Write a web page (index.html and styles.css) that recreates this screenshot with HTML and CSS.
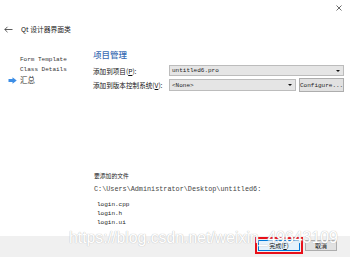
FILE: index.html
```html
<!DOCTYPE html>
<html lang="zh-CN">
<head>
    <meta charset="UTF-8">
    <meta name="viewport" content="width=device-width, initial-scale=1.0">
    <title>Qt 设计器界面类</title>
    <link rel="stylesheet" href="styles.css">
</head>
<body>

    <div class="wizard">
        <div class="titlebar">
            <svg class="close" width="6" height="6" viewBox="0 0 6 6">
                <path d="M0.5 0.5 L5.5 5.5 M5.5 0.5 L0.5 5.5" stroke="#444" stroke-width="0.8" fill="none"/>
            </svg>
        </div>

        <div class="title-row">
            <svg class="back" width="9" height="7" viewBox="0 0 9 7">
                <path d="M0.8 3.5 H8.5 M3.5 0.8 L0.8 3.5 L3.5 6.2" stroke="#333" stroke-width="0.8" fill="none"/>
            </svg>
            <span>Qt 设计器界面类</span>
        </div>

        <div class="main">
            <ul class="steps">
                <li>Form Template</li>
                <li>Class Details</li>
                <li class="current">
                    <!-- blue arrow for the active step -->
                    <svg width="9" height="7" viewBox="0 0 9 7">
                        <path d="M0.5 2 H4.5 V0.3 L8.7 3.5 L4.5 6.7 V5 H0.5 Z" fill="#3d8ee6"/>
                    </svg>
                    汇总
                </li>
            </ul>

            <div class="page">
                <h3>项目管理</h3>

                <div class="field">
                    <label>添加到项目(<u>P</u>):</label>
                    <div class="combo">untitled6.pro<i class="drop"></i></div>
                </div>
                <div class="field tall">
                    <label>添加到版本控制系统(<u>V</u>):</label>
                    <div class="combo">&lt;None&gt;<i class="drop"></i></div>
                    <button class="configure">Configure...</button>
                </div>

                <div class="files">
                    <p class="files-title">要添加的文件</p>
                    <p class="path">C:\Users\Administrator\Desktop\untitled6:</p>
                    <pre class="file-list">login.cpp
login.h
login.ui</pre>
                </div>
            </div>
        </div>

        <div class="footer">
            <span class="mark"><button class="btn default">完成(<u>F</u>)</button></span>
            <button class="btn cancel">取消</button>
        </div>

        <div class="watermark">https://blog.csdn.net/weixin_49643109</div>
    </div>

</body>
</html>
```

FILE: styles.css
```css
body {
    margin: 0;
    background: #fff;
    font-family: "Noto Sans CJK SC", "Noto Sans", sans-serif;
    color: #000;
}
.wizard {
    position: relative;
    width: 350px;
    height: 257px;
    display: flex;
    flex-direction: column;
    overflow: hidden;
}
.titlebar {
    height: 22px;
    box-sizing: border-box;
    display: flex;
    justify-content: flex-end;
    padding: 5px 8px 0 0;
}
.close {
    display: block;
}
.title-row {
    height: 14px;
    display: flex;
    align-items: center;
    padding-left: 4px;
    font-size: 6.8px;
    color: #222;
}
.back {
    display: block;
    margin-right: 8px;
}
.main {
    flex: 1;
    display: flex;
    min-height: 0;
}
.steps {
    width: 93px;
    box-sizing: border-box;
    margin: 0;
    padding: 19px 0 0 20px;
    list-style: none;
    font-family: "Liberation Mono", monospace;
    font-size: 6px;
    color: #333;
}
.steps li {
    height: 10px;
    line-height: 10px;
}
.steps li.current {
    display: flex;
    align-items: center;
    margin-left: -12px;
    font-family: "Noto Sans CJK SC", sans-serif;
    font-size: 7.5px;
}
.steps li.current svg {
    display: block;
    margin-right: 3px;
}
.page {
    flex: 1;
    display: flex;
    flex-direction: column;
    padding: 12px 6px 9px 0;
}
.page h3 {
    margin: 0;
    height: 12px;
    line-height: 12px;
    font-size: 8.5px;
    font-weight: 500;
    color: #3a6cb4;
}
.field {
    display: flex;
    align-items: center;
    height: 11px;
    margin-top: 5px;
}
.field.tall {
    height: 14px;
    margin-top: 2px;
}
.field label {
    width: 76px;
    font-size: 6.6px;
    color: #111;
}
.combo {
    flex: 1;
    height: 11px;
    box-sizing: border-box;
    display: flex;
    align-items: center;
    padding-left: 2px;
    background: #e5e5e5;
    border: 1px solid #bcbcbc;
    font-family: "Liberation Mono", monospace;
    font-size: 6px;
    color: #222;
}
.field.tall .combo {
    height: 12px;
}
.drop {
    margin-left: auto;
    margin-right: 3px;
    width: 0;
    height: 0;
    border-left: 2px solid transparent;
    border-right: 2px solid transparent;
    border-top: 2px solid #111;
}
.configure {
    width: 45px;
    height: 14px;
    margin-left: 3px;
    padding: 0;
    background: #e1e1e1;
    border: 1px solid #adadad;
    font-family: "Liberation Mono", monospace;
    font-size: 6px;
    color: #222;
}
.files {
    margin-top: auto;
    padding-left: 1px;
}
.files p {
    margin: 0;
}
.files-title {
    height: 10px;
    line-height: 10px;
    margin-bottom: 3px !important;
    font-size: 5.8px;
    color: #222;
}
.path {
    height: 10px;
    line-height: 10px;
    margin-bottom: 6px !important;
    font-family: "Liberation Mono", monospace;
    font-size: 6.8px;
    color: #444;
}
.file-list {
    margin: 0;
    padding-left: 3px;
    line-height: 9px;
    font-family: "Liberation Mono", monospace;
    font-size: 6px;
    color: #222;
}
.footer {
    height: 21px;
    box-sizing: border-box;
    display: flex;
    justify-content: flex-end;
    align-items: center;
    gap: 2px;
    padding: 0 13px 2px 0;
    background: #f0f0f0;
}
.mark {
    display: flex;
    padding: 1px;
    border: 2px solid #e8101a;
}
.btn {
    height: 11px;
    padding: 0;
    background: #e1e1e1;
    border: 1px solid #adadad;
    font-family: "Noto Sans CJK SC", sans-serif;
    font-size: 6px;
    color: #111;
}
.btn.default {
    width: 42px;
    background: #e5f1fb;
    border-color: #0078d7;
}
.btn.cancel {
    width: 32px;
}
.watermark {
    position: absolute;
    left: 69px;
    top: 230px;
    font-family: "Liberation Sans", Arial, sans-serif;
    font-size: 15.8px;
    line-height: 16px;
    color: #fff;
    text-shadow: 0 0 1px #c4c4c4, 0 0 1px #c4c4c4;
    white-space: nowrap;
    pointer-events: none;
}
```
